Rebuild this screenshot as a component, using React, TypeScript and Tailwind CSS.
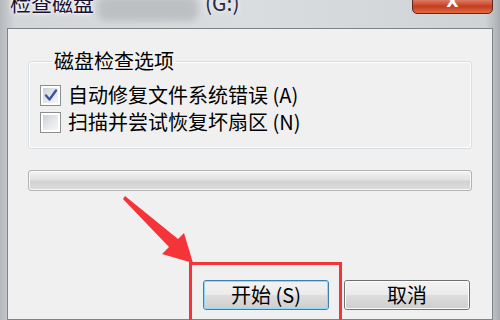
import React from 'react';

const cjk = { fontFamily: '"Noto Sans CJK SC", "Liberation Sans", sans-serif' };

const CheckBox = ({ checked }: { checked: boolean }) => (
    <span className="w-[21px] h-[21px] border border-[#8e8f8f] bg-white p-[2px] flex-shrink-0">
        <span className="w-full h-full flex items-center justify-center bg-gradient-to-br from-[#cbcfd5] via-[#e4e6e9] to-[#f7f7f7]">
            {checked && (
                <svg width="14" height="14" viewBox="0 0 14 14">
                    <path d="M2 7.5 L5.5 11.5 L12 2.5" fill="none" stroke="#3e51a8" strokeWidth="2.4" strokeLinecap="round" strokeLinejoin="round" />
                </svg>
            )}
        </span>
    </span>
);

const Button = ({ label, primary }: { label: string; primary?: boolean }) => (
    <button
        className={`w-[126px] h-[30px] rounded-[3px] border ${primary ? 'border-[#3c7fb1]' : 'border-[#707070]'} p-0`}
    >
        <span
            className={`w-full h-full flex items-center justify-center rounded-[2px] border ${primary ? 'border-[#8fd8f8]' : 'border-[#fcfcfc]'} bg-[linear-gradient(#f2f2f2_0%,#ebebeb_48%,#dddddd_52%,#cfcfcf_100%)] text-[20px] leading-none text-black`}
            style={cjk}
        >
            {label}
        </span>
    </button>
);

export default function App() {
    return (
        <div className="relative w-[500px] h-[320px] overflow-hidden flex flex-col bg-[linear-gradient(90deg,#b5b9bd_0%,#d3d6d9_3%,#dadde0_50%,#d0d3d6_97%,#a9adb1_100%)]" style={cjk}>
            {/* Title bar */}
            <div className="h-[28px] flex justify-between items-start flex-shrink-0">
                <div className="flex items-start pl-[10px] -mt-[13px]">
                    <span className="text-[21px] leading-[30px] text-[#1a1030] [text-shadow:0_0_6px_#ffffff,0_0_3px_#ffffff]">检查磁盘</span>
                    <span className="ml-[4px] mt-[10px] w-[100px] h-[24px] rounded-[8px] bg-[#bdc0c3] blur-[3px]" />
                    <span className="ml-[7px] text-[21px] leading-[30px] text-[#2a2a40] [text-shadow:0_0_6px_#ffffff]">(G:)</span>
                </div>
                <div className="mr-[7px] -mt-[5px] w-[81px] h-[19px] rounded-b-[5px] border border-[#5b2a22] bg-[linear-gradient(#e8a08d_0%,#d0583e_45%,#c43c1f_60%,#e06a40_100%)] flex justify-center items-end">
                    <span className="text-white text-[16px] font-bold leading-none mb-[3px]" style={{ fontFamily: '"DejaVu Sans", sans-serif' }}>X</span>
                </div>
            </div>

            {/* Client area */}
            <div className="ml-[7px] w-[486px] flex-1 border border-[#7f8489] bg-[#f0f0f0] flex flex-col px-[20px]">
                <fieldset className="mt-[20px] border border-[#d5dfe5] rounded-[3px] pl-[11px] pt-[11px] pb-[15px] shadow-[inset_0_0_0_1px_#ffffff]">
                    <legend className="ml-[12px] px-[2px] text-[20px] leading-[24px] text-black">磁盘检查选项</legend>
                    <div className="flex flex-col gap-[5px]">
                        <label className="flex items-center gap-[7px] h-[22px] text-[20px] leading-[22px] text-black">
                            <CheckBox checked />
                            <span>自动修复文件系统错误 (A)</span>
                        </label>
                        <label className="flex items-center gap-[7px] h-[22px] text-[20px] leading-[22px] text-black">
                            <CheckBox checked={false} />
                            <span>扫描并尝试恢复坏扇区 (N)</span>
                        </label>
                    </div>
                </fieldset>

                {/* Progress bar */}
                <div className="mt-[21px] h-[21px] rounded-[3px] border border-[#b2b2b2] bg-[linear-gradient(#f4f4f4_0%,#e2e2e2_45%,#d2d2d2_55%,#dcdcdc_100%)] shadow-[inset_0_0_0_1px_#f8f8f8]" />

                {/* Buttons */}
                <div className="mt-[89px] flex justify-end gap-[15px] pr-[2px]">
                    <Button label="开始 (S)" primary />
                    <Button label="取消" />
                </div>
            </div>

            {/* Annotation overlay */}
            <div className="absolute left-[189px] top-[262px] w-[153px] h-[70px] border-[3px] border-[#f5343a]" />
            <svg className="absolute left-0 top-0" width="500" height="320" viewBox="0 0 500 320">
                <polygon points="125,196 178,239 184,233 193,263 162,254 169,247 123,199" fill="#f5343a" />
            </svg>
        </div>
    );
}
